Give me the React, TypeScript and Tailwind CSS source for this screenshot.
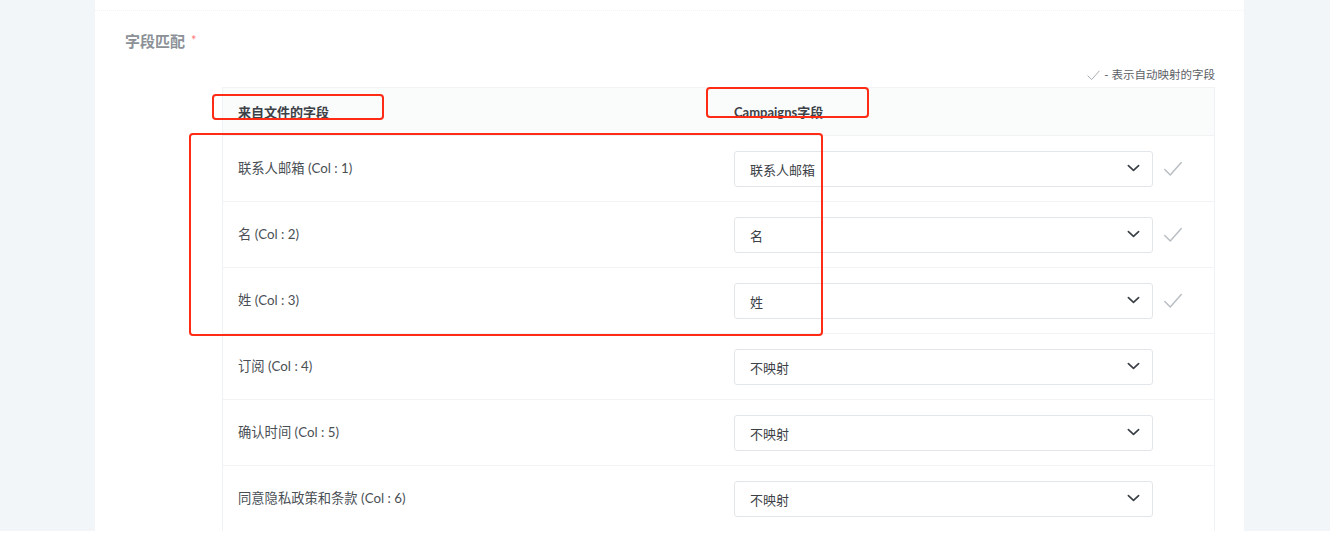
import React from 'react';

interface FieldRow {
  source: string;
  col: number;
  target: string;
  auto: boolean;
}

const rows: FieldRow[] = [
  { source: '联系人邮箱', col: 1, target: '联系人邮箱', auto: true },
  { source: '名', col: 2, target: '名', auto: true },
  { source: '姓', col: 3, target: '姓', auto: true },
  { source: '订阅', col: 4, target: '不映射', auto: false },
  { source: '确认时间', col: 5, target: '不映射', auto: false },
  { source: '同意隐私政策和条款', col: 6, target: '不映射', auto: false },
];

function CheckMark({ className = '' }: { className?: string }) {
  return (
    <svg viewBox="0 0 24 24" className={className} fill="none" stroke="currentColor" strokeWidth={1.6} strokeLinecap="round" strokeLinejoin="round">
      <path d="M3 12.5l6 6L21 5" />
    </svg>
  );
}

function Chevron() {
  return (
    <svg viewBox="0 0 14 8" className="w-[13px] h-[8px] text-[#3a3f45]" fill="none" stroke="currentColor" strokeWidth={1.8} strokeLinecap="round" strokeLinejoin="round">
      <path d="M1.5 1.5L7 6.5l5.5-5" />
    </svg>
  );
}

export default function App() {
  return (
    <div className="relative w-[1330px] h-[538px] bg-white overflow-hidden" style={{ fontFamily: 'Lato, "Noto Sans CJK SC", sans-serif' }}>
      <div className="flex h-[531px]">
        <div className="w-[95px] shrink-0 bg-[#f2f6f9]" />
        <div className="w-[1149px] shrink-0 bg-white pt-[10px] overflow-hidden">
          <div className="border-t border-dotted border-[#f1f3f5] h-full">
            <div className="pl-[30px] pt-[19px] flex items-center gap-[6px]">
              <span className="text-[15px] font-bold text-[#8c9197] leading-[22px]">字段匹配</span>
              <span className="text-[13px] text-[#ff7a7a] leading-[16px] pb-[2px]">*</span>
            </div>
            <div className="flex justify-end items-center pr-[29px] mt-[15px] h-[16px] gap-[3px]">
              <CheckMark className="w-[15px] h-[15px] text-[#a9aeb3]" />
              <span className="text-[11.5px] text-[#5c6167]">- 表示自动映射的字段</span>
            </div>
            <div className="ml-[127px] w-[993px] mt-[4px] border-x border-[#f0f3f5]">
              <div className="flex h-[48px] bg-[#fafbfb] border-t border-[#f1f3f5] items-end pb-[13px] text-[13px] font-bold text-[#3c4147]">
                <div className="w-[511px] pl-[15px]">来自文件的字段</div>
                <div>Campaigns字段</div>
              </div>
              {rows.map((row) => (
                <div key={row.col} className="flex items-center h-[66px] border-t border-[#f1f3f5] text-[13px] text-[#4a4f55]">
                  <div className="w-[511px] pl-[15px] pt-[1px] text-[13.3px]">
                    {row.source} (Col : {row.col})
                  </div>
                  <div className="w-[419px] h-[36px] border border-[#e3e6e9] rounded-[3px] flex items-center justify-between pl-[15px] pr-[12px] pt-[4px] text-[#3c4147]">
                    <span>{row.target}</span>
                    <span className="pb-[5px]"><Chevron /></span>
                  </div>
                  <div className="w-[40px] flex justify-center">
                    {row.auto && <CheckMark className="w-[22px] h-[22px] text-[#b9bec3]" />}
                  </div>
                </div>
              ))}
            </div>
          </div>
        </div>
        <div className="flex-1 bg-[#f2f6f9]" />
      </div>

      <div className="absolute left-[212px] top-[94px] w-[172px] h-[26px] border-2 border-[#ff2b14] rounded-[4px]" />
      <div className="absolute left-[706px] top-[87px] w-[163px] h-[31px] border-2 border-[#ff2b14] rounded-[4px]" />
      <div className="absolute left-[189px] top-[133px] w-[634px] h-[203px] border-2 border-[#ff2b14] rounded-[4px]" />
    </div>
  );
}
